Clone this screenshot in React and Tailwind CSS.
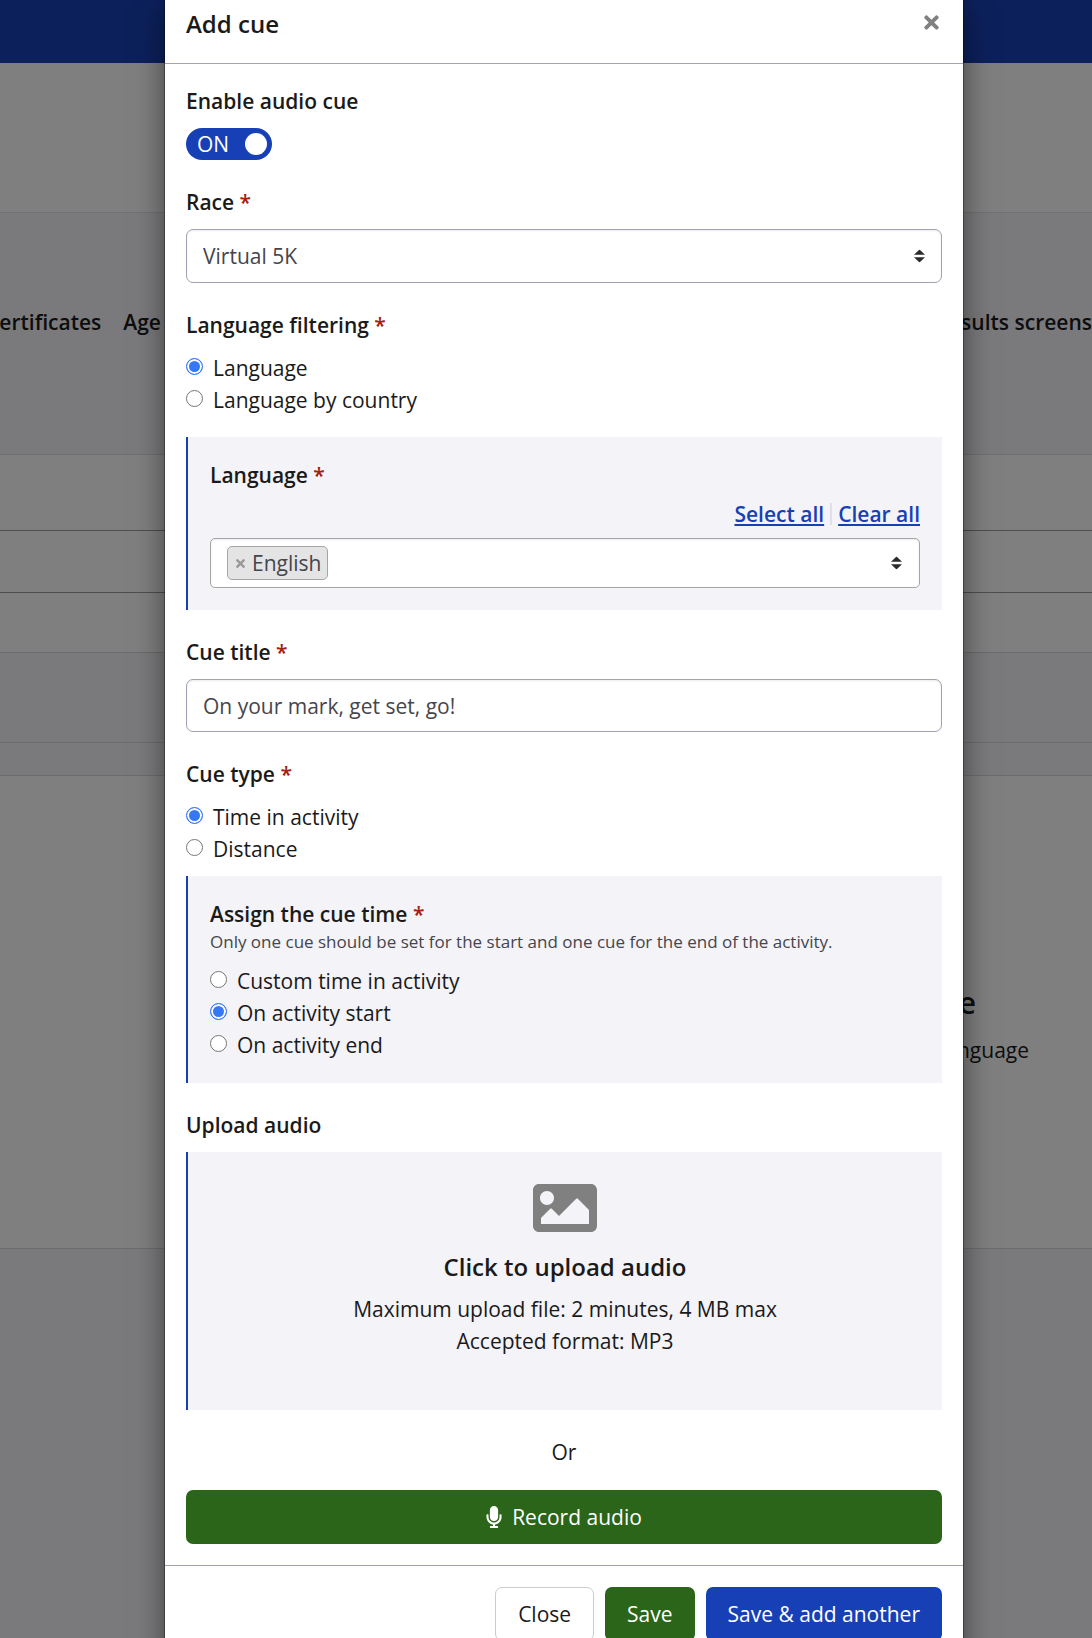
import { useState } from 'react'
import { FaImage, FaMicrophone, FaTimes } from 'react-icons/fa'

function Label({ as: Tag = 'label', required, children, ...rest }) {
  return (
    <Tag className="block w-fit font-semibold" {...rest}>
      {children}
      {required && <span className="text-[#a3200f]"> *</span>}
    </Tag>
  )
}

function Radios({ name, options, value, onChange }) {
  return (
    <div className="mt-[11px]">
      {options.map((option) => (
        <label key={option} className="flex w-fit gap-2.5">
          <input
            type="radio"
            name={name}
            checked={option === value}
            onChange={() => onChange(option)}
            className="mt-1.5 size-[17px] shrink-0 appearance-none rounded-full border border-[#767676] bg-white checked:border-[#3478f6] checked:bg-[#3478f6] checked:shadow-[inset_0_0_0_2px_#fff]"
          />
          {option}
        </label>
      ))}
    </div>
  )
}

function Panel({ className = '', children }) {
  return <div className={`border-l-2 border-[#1840b6] bg-[#f3f3f8] ${className}`}>{children}</div>
}

function SortArrows() {
  return (
    <svg
      aria-hidden
      viewBox="0 0 11 13"
      className="pointer-events-none absolute right-[17px] top-1/2 h-[13px] w-[11px] -translate-y-1/2 fill-[#2b2b2d]"
    >
      <path d="M5.5 0 11 5.3H0zM5.5 13 11 7.7H0z" />
    </svg>
  )
}

// The event settings page that stays visible, dimmed, around the dialog.
function Backdrop() {
  return (
    <div aria-hidden className="absolute inset-0 overflow-hidden bg-[#f4f4f9]">
      <div className="h-[63px] bg-[#1840b6]" />
      <div className="h-[150px] border-b border-[#e2e2ea] bg-white" />
      <div className="flex h-[241px] justify-between pt-[93px] font-semibold">
        <div className="-ml-[14px] flex gap-[22px]">
          <span>Certificates</span>
          <span>Age</span>
        </div>
        <span>Results screens</span>
      </div>
      <div className="h-[77px] border-y border-t-[#dcdce2] border-b-[#9c9c9c] bg-white" />
      <div className="h-[62px] border-b border-[#9c9c9c] bg-white" />
      <div className="h-[60px] border-b border-[#d8d8de] bg-white" />
      <div className="h-[90px] border-b border-[#d8d8de]" />
      <div className="h-[33px] border-b border-[#d8d8de]" />
      <div className="h-[473px] border-b border-[#d8d8de] bg-white pt-[207px] text-right">
        <div className="pr-[116px] text-[30px] leading-10 font-semibold">cue</div>
        <div className="pr-[63px] pt-[11px]">language</div>
      </div>
      <div className="absolute inset-0 bg-black/50" />
    </div>
  )
}

const FIELD =
  'w-full appearance-none rounded-[7px] border border-[#a2a2b3] bg-white px-4 text-[#45454c] shadow-[inset_0_1px_2px_rgba(0,0,0,0.08)]'
const BUTTON = 'h-[54px] rounded-[7px] px-[22px]'

export default function App() {
  const [enabled, setEnabled] = useState(true)
  const [filter, setFilter] = useState('Language')
  const [type, setType] = useState('Time in activity')
  const [time, setTime] = useState('On activity start')
  const [title, setTitle] = useState('On your mark, get set, go!')

  return (
    <div className="relative h-screen overflow-hidden font-['Open_Sans',sans-serif] text-[21px] leading-8 text-[#1a1a1a]">
      <Backdrop />

      <div
        role="dialog"
        aria-labelledby="dialog-title"
        className="relative mr-[129px] ml-[165px] bg-white shadow-[0_0_0_1px_rgba(0,0,0,0.3),0_7px_28px_rgba(0,0,0,0.5)]"
      >
        <header className="flex h-16 items-start justify-between border-b border-[#a2a2b3] px-[21px] pt-2">
          <h2 id="dialog-title" className="text-2xl font-semibold">
            Add cue
          </h2>
          <button type="button" aria-label="Close dialog" className="pt-1 text-[#808080]">
            <FaTimes className="size-[21px]" />
          </button>
        </header>

        <div className="space-y-[26px] p-[21px]">
          <div>
            <Label id="enable-label" as="div">
              Enable audio cue
            </Label>
            <button
              type="button"
              role="switch"
              aria-checked={enabled}
              aria-labelledby="enable-label"
              onClick={() => setEnabled(!enabled)}
              className="mt-[11px] flex h-8 w-[86px] items-center justify-between rounded-full bg-[#1840b6] pr-[5px] pl-[11px] text-white"
            >
              {enabled ? 'ON' : 'OFF'}
              <span className="size-[22px] rounded-full bg-white" />
            </button>
          </div>

          <div>
            <Label htmlFor="race" required>
              Race
            </Label>
            <div className="relative mt-[11px]">
              <select id="race" className={`h-[54px] ${FIELD}`}>
                <option>Virtual 5K</option>
              </select>
              <SortArrows />
            </div>
          </div>

          <div>
            <Label as="div" required>
              Language filtering
            </Label>
            <Radios
              name="filter"
              options={['Language', 'Language by country']}
              value={filter}
              onChange={setFilter}
            />
            <Panel className="mt-[21px] p-[22px]">
              <Label as="div" required>
                Language
              </Label>
              <div className="mt-[7px] flex items-center justify-end gap-1.5 font-semibold text-[#1840b6]">
                <a href="#select-all" className="underline decoration-2 underline-offset-2">
                  Select all
                </a>
                <span className="h-[22px] w-0.5 bg-[#e0e0ea]" />
                <a href="#clear-all" className="underline decoration-2 underline-offset-2">
                  Clear all
                </a>
              </div>
              <div className="relative mt-2 flex h-[50px] items-center rounded-[5px] border border-[#a5a5a5] bg-white px-4 shadow-[inset_0_1px_2px_rgba(0,0,0,0.08)]">
                <span className="flex h-[34px] items-center gap-[5px] rounded-[5px] border border-[#a5a5a5] bg-[#e4e4e4] px-1.5 text-[#45454c]">
                  <button type="button" aria-label="Remove English" className="text-[#999]">
                    <FaTimes className="size-[13px]" />
                  </button>
                  English
                </span>
                <SortArrows />
              </div>
            </Panel>
          </div>

          <div>
            <Label htmlFor="title" required>
              Cue title
            </Label>
            <input
              id="title"
              type="text"
              value={title}
              onChange={(e) => setTitle(e.target.value)}
              className={`mt-[11px] block h-[53px] ${FIELD}`}
            />
          </div>

          <div>
            <Label as="div" required>
              Cue type
            </Label>
            <Radios
              name="type"
              options={['Time in activity', 'Distance']}
              value={type}
              onChange={setType}
            />
            <Panel className="mt-[11px] p-[22px]">
              <Label as="div" required>
                Assign the cue time
              </Label>
              <p className="text-[17px] leading-6 text-[#45454c]">
                Only one cue should be set for the start and one cue for the end of the activity.
              </p>
              <Radios
                name="time"
                options={['Custom time in activity', 'On activity start', 'On activity end']}
                value={time}
                onChange={setTime}
              />
            </Panel>
          </div>

          <div>
            <Label as="div">Upload audio</Label>
            <Panel className="mt-[11px]">
              <button type="button" className="flex w-full flex-col items-center pt-6 pb-[53px]">
                <FaImage className="size-16 text-[#808080]" />
                <span className="mt-[11px] text-2xl font-semibold">Click to upload audio</span>
                <span className="mt-2.5">Maximum upload file: 2 minutes, 4 MB max</span>
                <span>Accepted format: MP3</span>
              </button>
            </Panel>
          </div>

          <div>
            <p className="text-center">Or</p>
            <button
              type="button"
              className="mt-[22px] flex h-[54px] w-full items-center justify-center gap-2.5 rounded-[7px] bg-[#2b651a] text-white"
            >
              <FaMicrophone className="h-[22px] w-4" />
              Record audio
            </button>
          </div>
        </div>

        <footer className="flex justify-end gap-[11px] border-t border-[#a2a2b3] p-[21px]">
          <button type="button" className={`${BUTTON} border border-[#ccc] bg-white`}>
            Close
          </button>
          <button type="button" className={`${BUTTON} bg-[#2b651a] text-white`}>
            Save
          </button>
          <button type="button" className={`${BUTTON} bg-[#1840b6] text-white`}>
            Save &amp; add another
          </button>
        </footer>
      </div>
    </div>
  )
}
